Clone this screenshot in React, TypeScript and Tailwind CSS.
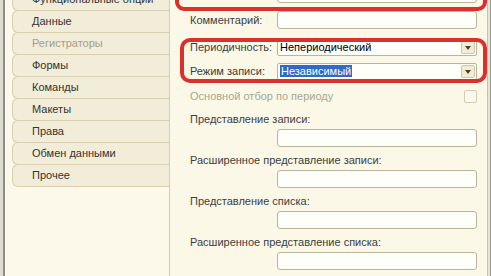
import React from 'react'

const font = { fontFamily: '"Liberation Sans", Arial, sans-serif' }

const tabs: { title: string; disabled?: boolean }[] = [
  { title: 'Функциональные опции' },
  { title: 'Данные' },
  { title: 'Регистраторы', disabled: true },
  { title: 'Формы' },
  { title: 'Команды' },
  { title: 'Макеты' },
  { title: 'Права' },
  { title: 'Обмен данными' },
  { title: 'Прочее' },
]

const Input: React.FC<{ h?: string }> = () => (
  <div className="w-[200px] h-[18px] rounded-[3px] border border-[#b9b49c] bg-[#fffffa]" />
)

const Select: React.FC<{ children: React.ReactNode }> = x => (
  <div className="flex items-center w-[200px] h-[17px] rounded-[2px] border border-[#b9b49c] bg-[#fffffa] pl-[2px] pr-px">
    <div className="flex-1 text-[11px] leading-[13px] text-black">{x.children}</div>
    <div className="flex items-center justify-center w-[14px] h-[13px] rounded-[2px] border border-[#cfc7a8] bg-[#f1ecd6]">
      <div className="w-0 h-0 border-l-[3.5px] border-r-[3.5px] border-t-[4px] border-l-transparent border-r-transparent border-t-[#4e431f]" />
    </div>
  </div>
)

const Row: React.FC<{ label: string; children: React.ReactNode; h: string; mt: string }> = x => (
  <div className={`flex items-center pl-[20px] ${x.h} ${x.mt}`}>
    <div className="w-[87px] text-[11px] text-[#3d3d3d] whitespace-nowrap">{x.label}</div>
    {x.children}
  </div>
)

const Field: React.FC<{ label: string; mt: string }> = x => (
  <div className={`flex flex-col ${x.mt}`}>
    <div className="h-[14px] pl-[20px] text-[11px] leading-[14px] text-[#3d3d3d] whitespace-nowrap">{x.label}</div>
    <div className="mt-[3px] ml-[107px]">
      <Input />
    </div>
  </div>
)

export default function App() {
  return (
    <div className="flex w-[491px] h-[276px] overflow-hidden bg-[#fbf8e7]" style={font}>
      {/* left: tabs */}
      <div className="flex w-[170px] shrink-0 bg-[#fcf9eb]">
        <div className="w-[3px] bg-[#dedbd0]" />
        <div className="w-[2px] bg-[#8f8d85]" />
        <div className="flex-1 flex flex-col pl-[7px] mt-[-12px]">
          {tabs.map((t, i) => (
            <div key={t.title}
                 className={`flex items-center h-[23px] pl-[19px] rounded-l-[6px] border border-r-0 border-[#d8d0b1] bg-[#f2edd8] text-[11px] whitespace-nowrap ${i > 0 ? '-mt-px' : ''} ${t.disabled ? 'text-[#a29e8a]' : 'text-[#333333]'}`}>
              {t.title}
            </div>
          ))}
        </div>
        <div className="w-px bg-[#d5cdae]" />
      </div>

      {/* right: form */}
      <div className="flex flex-col w-[318px] shrink-0 border-r border-[#c9c1a2] bg-[#fbf8e7]">
        <div className="relative mt-[-15px]">
          <Row label="" h="h-[18px]" mt="">
            <Input />
          </Row>
          <div className="absolute left-[5px] right-0 top-[-4px] bottom-[-8px] border-4 border-[#d9322c] rounded-[9px] pointer-events-none" />
        </div>

        <Row label="Комментарий:" h="h-[18px]" mt="mt-[8px]">
          <Input />
        </Row>

        <div className="relative mt-[10px]">
          <Row label="Периодичность:" h="h-[17px]" mt="">
            <Select>Непериодический</Select>
          </Row>
          <Row label="Режим записи:" h="h-[17px]" mt="mt-[7px]">
            <Select>
              <span className="bg-[#3169c6] text-white px-px">Независимый</span>
            </Select>
          </Row>
          <div className="absolute left-[10px] right-0 top-[-1px] bottom-[-3px] border-4 border-[#d9322c] rounded-[10px] pointer-events-none" />
        </div>

        <div className="flex items-center h-[15px] mt-[9px] pl-[20px] pr-[10px]">
          <div className="flex-1 text-[11px] text-[#aaa690] whitespace-nowrap">Основной отбор по периоду</div>
          <div className="w-[13px] h-[13px] rounded-[2px] border border-[#d3cdb6] bg-[#fbf9ee]" />
        </div>

        <Field label="Представление записи:" mt="mt-[8px]" />
        <Field label="Расширенное представление записи:" mt="mt-[6px]" />
        <Field label="Представление списка:" mt="mt-[6px]" />
        <Field label="Расширенное представление списка:" mt="mt-[6px]" />
      </div>

      <div className="flex w-[3px] shrink-0">
        <div className="w-[2px] bg-[#e6e3d7]" />
        <div className="w-px bg-[#9a978c]" />
      </div>
    </div>
  )
}
